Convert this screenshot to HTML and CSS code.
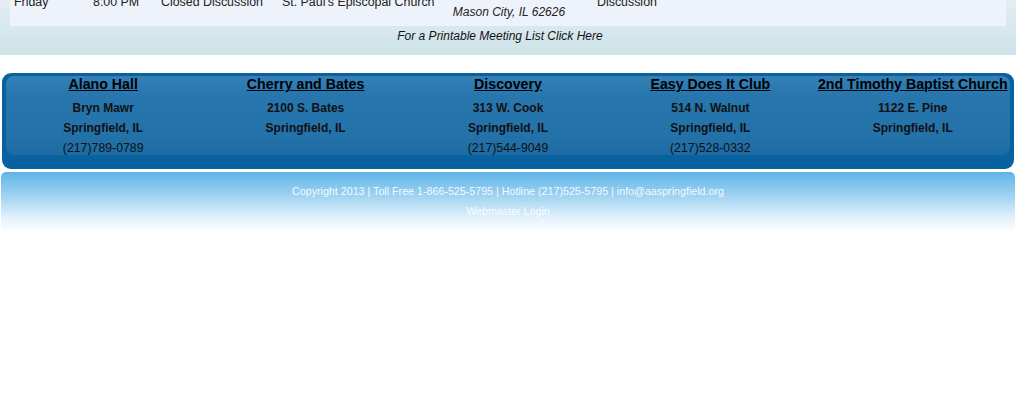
FILE: index.html
```html
<!DOCTYPE html>
<html>
<head>
<meta charset="utf-8">
<link rel="stylesheet" href="styles.css">
</head>
<body>
<div class="schedule">
  <div class="panel">
    <div class="row">
      <div class="cell">Friday</div>
      <div class="cell">8:00 PM</div>
      <div class="cell">Closed Discussion</div>
      <div class="cell">St. Paul's Episcopal Church</div>
      <div class="cell addr"><span>1000 W. Chestnut St.</span><span>Mason City, IL 62626</span></div>
      <div class="cell last">Discussion</div>
    </div>
  </div>
  <p class="printable">For a Printable Meeting List Click Here</p>
</div>

<div class="clubs">
  <div class="clubs-inner">
    <div class="club first">
      <a class="name">Alano Hall</a>
      <span class="b">Bryn Mawr</span>
      <span class="b">Springfield, IL</span>
      <span>(217)789-0789</span>
    </div>
    <div class="club">
      <a class="name">Cherry and Bates</a>
      <span class="b">2100 S. Bates</span>
      <span class="b">Springfield, IL</span>
    </div>
    <div class="club">
      <a class="name">Discovery</a>
      <span class="b">313 W. Cook</span>
      <span class="b">Springfield, IL</span>
      <span>(217)544-9049</span>
    </div>
    <div class="club">
      <a class="name">Easy Does It Club</a>
      <span class="b">514 N. Walnut</span>
      <span class="b">Springfield, IL</span>
      <span>(217)528-0332</span>
    </div>
    <div class="club last-club">
      <a class="name">2nd Timothy Baptist Church</a>
      <span class="b">1122 E. Pine</span>
      <span class="b">Springfield, IL</span>
    </div>
  </div>
</div>

<div class="footer">
  <p>Copyright 2013 | Toll Free 1-866-525-5795 | Hotline (217)525-5795 | info@aaspringfield.org</p>
  <p>Webmaster Login</p>
</div>
</body>
</html>
```

FILE: styles.css
```css
html, body {
  margin: 0;
  padding: 0;
  background: #ffffff;
  font-family: "Liberation Sans", Arial, sans-serif;
}

.schedule {
  height: 55px;
  padding: 0 10px;
  background: linear-gradient(#e3edf4, #cde3e8);
  overflow: hidden;
}

.panel {
  height: 26px;
  overflow: hidden;
  background: #eef2fb;
  padding-left: 4px;
}

.row {
  display: grid;
  grid-template-columns: 79px 68px 121px 148px 158px 1fr;
  align-items: center;
  margin-top: -18px;
  font-size: 12.4px;
  line-height: 20px;
  color: #222;
  white-space: nowrap;
}

.addr {
  display: flex;
  flex-direction: column;
  align-items: center;
  font-style: italic;
  font-size: 12px;
}

.last {
  padding-left: 9px;
}

.printable {
  margin: 0;
  padding: 3px 16px 0 0;
  font-size: 12px;
  line-height: 14px;
  font-style: italic;
  text-align: center;
  color: #111;
}

.clubs {
  margin: 18px 2px 0;
  height: 96px;
  box-sizing: border-box;
  padding: 3px 4px 14px;
  border-radius: 9px;
  background: #0862a0;
}

.clubs-inner {
  height: 79px;
  border-radius: 8px;
  background: linear-gradient(#3581b7 0%, #2776ae 25%, #2372aa 75%, #1d6ba4 100%);
  display: grid;
  grid-template-columns: 198.4px repeat(3, 202.4px) 198.4px;
}

.club {
  display: flex;
  flex-direction: column;
  align-items: center;
  font-size: 12.3px;
  line-height: 20px;
  color: #111;
  white-space: nowrap;
}

.club.first {
  margin-left: -4px;
}

.club.last-club {
  margin-right: -4px;
}

.club .name {
  font-size: 14.2px;
  font-weight: bold;
  text-decoration: underline;
  color: #000;
  line-height: 17px;
  margin-bottom: 5px;
}

.club .b {
  font-weight: bold;
  font-size: 12px;
}

.footer {
  margin: 3px 1px 0;
  height: 60px;
  box-sizing: border-box;
  padding-top: 9px;
  border-radius: 5px 5px 0 0;
  background: linear-gradient(#5db4e8 0%, #a9d7f3 45%, #e8f4fc 80%, #ffffff 100%);
  text-align: center;
}

.footer p {
  margin: 0;
  font-size: 10.7px;
  line-height: 20px;
  color: rgba(255, 255, 255, 0.92);
}
```
